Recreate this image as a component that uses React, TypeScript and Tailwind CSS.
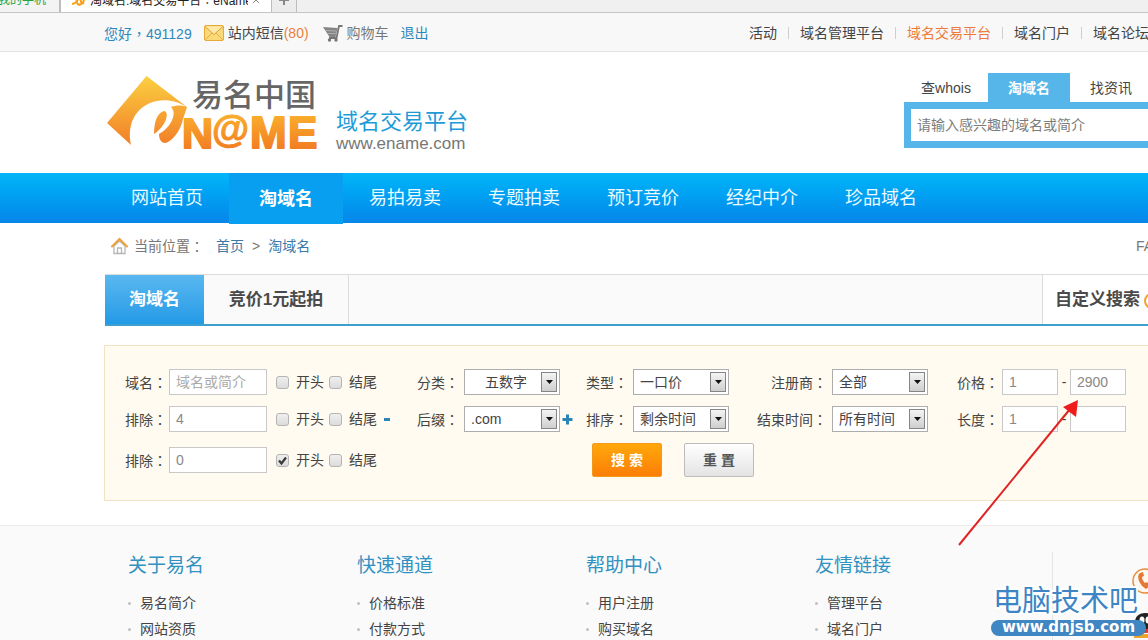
import type { ReactNode } from "react";

const siteLinks = ["活动", "域名管理平台", "域名交易平台", "域名门户", "域名论坛"];

const navItems = ["网站首页", "淘域名", "易拍易卖", "专题拍卖", "预订竞价", "经纪中介", "珍品域名"];

const footerColumns = [
  { title: "关于易名", links: ["易名简介", "网站资质"] },
  { title: "快速通道", links: ["价格标准", "付款方式"] },
  { title: "帮助中心", links: ["用户注册", "购买域名"] },
  { title: "友情链接", links: ["管理平台", "域名门户"] },
];

// Full-width punctuation sits in the middle of its cell in the TC face
function Mark({ children }: { children: string }) {
  return <span className="font-['Noto_Sans_CJK_TC',sans-serif]">{children}</span>;
}

function BrowserTabs() {
  return (
    <div className="flex h-[13px] items-end overflow-hidden border-b border-[#c4c4c4] bg-[#f0f0f0] text-xs whitespace-nowrap">
      <div className="flex h-6 w-[61px] shrink-0 items-center border-r-2 border-[#bdbdbd] bg-[#f3f3f3]">
        <span className="-ml-0.5 text-[#1fa53c]">我的手机</span>
      </div>
      <div className="flex h-6 w-[210px] shrink-0 items-center gap-1 bg-white pl-2.5 text-[#222]">
        <svg width="15" height="14" viewBox="0 0 15 14" className="shrink-0">
          <path d="M1 11c3 0 6-3 7-8M2 6c2-1 4 0 4 3s2 3 3 2M8 12c3-1 5-3 5-6s-2-3-3 0 1 5 3 4" fill="none" stroke="#f6a11d" strokeWidth="2" />
        </svg>
        <span className="w-[158px] overflow-hidden">淘域名:域名交易平台<Mark>：</Mark>eName</span>
        <svg width="8" height="8" viewBox="0 0 8 8" className="shrink-0">
          <path d="M1 1l6 6M7 1l-6 6" stroke="#888" />
        </svg>
      </div>
      <div className="flex h-6 w-[26px] shrink-0 items-center justify-center border-x border-[#bdbdbd] bg-[#ececec]">
        <svg width="10" height="10" viewBox="0 0 10 10">
          <path d="M5 0v10M0 5h10" stroke="#888" strokeWidth="2" />
        </svg>
      </div>
    </div>
  );
}

function TopBar() {
  return (
    <div className="flex h-[39px] items-center overflow-hidden border-b border-[#e3e3e3] bg-[#f8f8f8] pt-0.5 pl-[104px] whitespace-nowrap">
      <span className="text-[#2f88bd]">您好<Mark>，</Mark>491129</span>
      <a href="#messages" className="ml-3 flex items-center gap-1">
        <svg width="20" height="16" viewBox="0 0 20 16">
          <rect x="0.5" y="0.5" width="19" height="15" rx="1.5" fill="#fbd978" stroke="#e6a93a" />
          <path d="M1 15l7-7M19 15l-7-7" stroke="#e9ae43" fill="none" />
          <path d="M1 1.5l9 8 9-8" fill="#fdeaa9" stroke="#dfa036" />
        </svg>
        <span>站内短信<span className="text-[#e8813c]">(80)</span></span>
      </a>
      <a href="#cart" className="ml-3.5 flex items-center gap-1 text-[#777]">
        <svg width="20" height="17" viewBox="0 0 20 17">
          <path d="M0 2l14.500 1L12.500 12H6.500z" fill="#858585" />
          <path d="M2.500 5.500l11 .5M4.500 8.500h8.500" stroke="#b8b8b8" strokeWidth="0.8" />
          <path d="M19.500 1h-3.500L13.500 13H6" fill="none" stroke="#777" strokeWidth="1.800" />
          <circle cx="6.500" cy="15" r="1.700" fill="#777" />
          <circle cx="13" cy="15" r="1.700" fill="#777" />
        </svg>
        购物车
      </a>
      <a href="#logout" className="ml-3 text-[#2f88bd]">退出</a>
      <nav className="ml-auto flex w-[399px] shrink-0 items-center gap-[11px] overflow-hidden">
        {siteLinks.map((link, i) => (
          <div key={link} className="flex shrink-0 items-center gap-[11px]">
            {i > 0 && <span className="h-3 w-px bg-[#cfcfcf]" />}
            <a href="#site" className={link === "域名交易平台" ? "text-[#ee7a38]" : ""}>{link}</a>
          </div>
        ))}
      </nav>
    </div>
  );
}

function Logo() {
  return (
    <svg width="216" height="80" viewBox="0 0 216 80" role="img" aria-label="易名中国 eName">
      <defs>
        <linearGradient id="diamond" x1="0" y1="0" x2="0" y2="70" gradientUnits="userSpaceOnUse">
          <stop offset="0" stopColor="#fbd040" />
          <stop offset="1" stopColor="#f27d28" />
        </linearGradient>
        <linearGradient id="letters" x1="0" y1="39" x2="0" y2="74" gradientUnits="userSpaceOnUse">
          <stop offset="0" stopColor="#f9ad2c" />
          <stop offset="1" stopColor="#f27c22" />
        </linearGradient>
      </defs>
      <g fill="url(#diamond)">
        <path d="M40.500 0L81 31C70 24 56 22 44 27C28 34 21 50 25 69L1 47z" />
        <path d="M48 58C48 46 51 37 58 35C64 36 60 50 48 58z" />
        <path d="M81 31C76 29 70 29 65 31C72 38 64 52 53 58C53 65 57 69 62 66C69 62 75 53 77 43z" />
      </g>
      <text x="86" y="30" fontSize="31" fontWeight="500" fill="#666" fontFamily="'Noto Sans CJK SC', sans-serif">易名中国</text>
      <g fontFamily="'Liberation Sans', sans-serif" fontWeight="700" fill="url(#letters)" stroke="url(#letters)" strokeWidth="2" strokeLinejoin="round">
        <text x="76" y="72" fontSize="43">N</text>
        <text x="106" y="66" fontSize="38" strokeWidth="1">@</text>
        <text x="144" y="72" fontSize="44">M</text>
        <text x="182" y="72" fontSize="44">E</text>
      </g>
    </svg>
  );
}

function Header() {
  return (
    <header className="flex h-[121px] overflow-hidden pl-[106px] whitespace-nowrap">
      <a href="#home" className="mt-6 shrink-0"><Logo /></a>
      <div className="mt-14 ml-3.5 shrink-0">
        <p className="text-[22px] leading-7 text-[#1e9bd7]">域名交易平台</p>
        <p className="text-[17px] leading-4 text-[#777]">www.ename.com</p>
      </div>
      <div className="mt-[21px] ml-auto w-[244px] shrink-0">
        <div className="flex h-[29px]">
          <button type="button" className="w-[84px] shrink-0">查whois</button>
          <button type="button" className="w-[82px] shrink-0 bg-[#56b6ea] font-bold text-white">淘域名</button>
          <button type="button" className="ml-5 shrink-0">找资讯</button>
        </div>
        <input
          aria-label="搜索域名"
          placeholder="请输入感兴趣的域名或简介"
          className="h-[46px] w-full border-[7px] border-r-0 border-[#56b6ea] bg-white px-1.5 outline-none placeholder:text-[#7c7c7c]"
        />
      </div>
    </header>
  );
}

function MainNav() {
  return (
    <nav className="flex h-[50px] gap-[5px] bg-linear-to-b from-[#02b6f8] to-[#0785ea] pl-[110px] text-lg text-[#eafaff]">
      {navItems.map((item) => (
        <a
          key={item}
          href="#nav"
          className={
            item === "淘域名"
              ? "flex h-[51px] w-[114px] shrink-0 items-center justify-center bg-[#089ff0] font-bold text-white"
              : "flex w-[114px] shrink-0 items-center justify-center"
          }
        >
          {item}
        </a>
      ))}
    </nav>
  );
}

function Breadcrumb() {
  return (
    <div className="flex h-[51px] items-center overflow-hidden pb-1.5 pl-[111px] text-[#777] whitespace-nowrap">
      <svg width="17" height="18" viewBox="0 0 17 18" className="mr-1.5 shrink-0">
        <path d="M3 9v7.500h11V9L8.500 4z" fill="#fff" stroke="#b5b5b5" strokeWidth="1.300" />
        <path d="M6.500 16v-5h4v5" fill="none" stroke="#b5b5b5" strokeWidth="1.300" />
        <path d="M1 9.500L8.500 2 16 9.500" fill="none" stroke="#f0a03c" strokeWidth="2" strokeLinecap="round" />
      </svg>
      当前位置<Mark>：</Mark>
      <a href="#home" className="ml-3 text-[#3b79a6]">首页</a>
      <span className="mx-2">&gt;</span>
      <a href="#tao" className="text-[#3b79a6]">淘域名</a>
      <a href="#faq" className="ml-auto w-3 overflow-hidden">FAQ</a>
    </div>
  );
}

function ListingTabs() {
  return (
    <div className="ml-[105px] flex h-[52px] overflow-hidden border-t border-b-2 border-t-[#dcdcdc] border-b-[#3fa0d0] bg-[#fafafa] text-[17px] font-bold text-[#4a4a4a] whitespace-nowrap">
      <button type="button" className="w-[99px] shrink-0 bg-linear-to-b from-[#58b8f0] to-[#219ae6] pt-0.5 text-white">淘域名</button>
      <button type="button" className="w-[145px] shrink-0 border-r border-[#dcdcdc] pt-0.5">竞价1元起拍</button>
      <button type="button" className="ml-auto flex w-[106px] shrink-0 items-center gap-1 overflow-hidden border-l border-[#dcdcdc] bg-white pt-0.5 pl-3">
        自定义搜索
        <svg width="16" height="16" viewBox="0 0 16 16" className="shrink-0">
          <circle cx="8" cy="8" r="7" fill="#fff" stroke="#eda32c" strokeWidth="2" />
        </svg>
      </button>
    </div>
  );
}

function TextField({ id, label, value, placeholder }: { id: string; label: string; value?: string; placeholder?: string }) {
  return (
    <>
      <label htmlFor={id} className="w-11 shrink-0">{label}<Mark>：</Mark></label>
      <input
        id={id}
        defaultValue={value}
        placeholder={placeholder}
        className="h-[26px] w-[98px] border border-[#c8c8c8] bg-white px-1.5 text-[#888] outline-none placeholder:text-[#aaa]"
      />
    </>
  );
}

function Check({ label, checked }: { label: string; checked?: boolean }) {
  return (
    <label className="flex items-center gap-[7px]">
      <span className="relative flex">
        <input
          type="checkbox"
          defaultChecked={checked}
          className="peer size-[13px] appearance-none rounded-[3px] border border-[#b4b4b4] bg-linear-to-b from-[#efefef] to-[#dcdcdc]"
        />
        <svg viewBox="0 0 13 13" className="pointer-events-none absolute inset-0 hidden size-[13px] peer-checked:block">
          <path d="M3 6.500l2.500 3L10 3.500" fill="none" stroke="#3a3a3a" strokeWidth="2.200" />
        </svg>
      </span>
      {label}
    </label>
  );
}

function MatchRow({ id, label, value, placeholder, startChecked, children }: {
  id: string;
  label: string;
  value?: string;
  placeholder?: string;
  startChecked?: boolean;
  children?: ReactNode;
}) {
  return (
    <div className="flex items-center">
      <TextField id={id} label={label} value={value} placeholder={placeholder} />
      <div className="ml-[9px] flex items-center gap-[5px]">
        <Check label="开头" checked={startChecked} />
        <Check label="结尾" />
        {children}
      </div>
    </div>
  );
}

function SelectField({ id, label, value, wide, indent, children }: {
  id: string;
  label: string;
  value: string;
  wide?: boolean;
  indent?: boolean;
  children?: ReactNode;
}) {
  return (
    <div className="flex items-center">
      <label htmlFor={id} className={wide ? "w-[88px] shrink-0 pr-[5px] text-right" : "w-[47px] shrink-0"}>
        {label}<Mark>：</Mark>
      </label>
      <div className="relative">
        <select
          id={id}
          className={
            indent
              ? "block h-[26px] w-24 appearance-none border border-[#adadad] bg-white pl-5 text-[#444]"
              : "block h-[26px] w-24 appearance-none border border-[#adadad] bg-white pl-1.5 text-[#444]"
          }
        >
          <option>{value}</option>
        </select>
        <span className="pointer-events-none absolute top-[3px] right-[3px] flex h-5 w-4 items-center justify-center border border-[#858585] bg-linear-to-b from-[#f4f4f4] to-[#cfcfcf]">
          <svg width="7" height="4" viewBox="0 0 7 4">
            <path d="M0 0h7L3.500 4z" fill="#111" />
          </svg>
        </span>
      </div>
      {children}
    </div>
  );
}

function RangeField({ id, label, from, to }: { id: string; label: string; from: string; to?: string }) {
  const box = "h-[26px] w-14 border border-[#c8c8c8] bg-white px-1.5 text-[#888] outline-none";
  return (
    <div className="flex items-center">
      <label htmlFor={id} className="w-[45px] shrink-0">{label}<Mark>：</Mark></label>
      <input id={id} defaultValue={from} className={box} />
      <span className="w-3 text-center">-</span>
      <input aria-label={`${label}上限`} defaultValue={to} className={box} />
    </div>
  );
}

function SearchForm() {
  return (
    <form className="mt-[19px] ml-[104px] overflow-hidden border border-r-0 border-[#f2e3c4] bg-[#fffbf0] py-[23px] pl-5 whitespace-nowrap">
      <div className="grid grid-cols-[292px_169px_158px_213px_auto] grid-rows-[26px_26px_34px] gap-y-[11px]">
        <MatchRow id="name" label="域名" placeholder="域名或简介" />
        <SelectField id="category" label="分类" value="五数字" indent />
        <SelectField id="type" label="类型" value="一口价" />
        <SelectField id="registrar" label="注册商" value="全部" wide />
        <RangeField id="price" label="价格" from="1" to="2900" />

        <MatchRow id="exclude-1" label="排除" value="4">
          <button type="button" aria-label="减少" className="ml-0.5 h-[3px] w-1.5 bg-[#2a84b8]" />
        </MatchRow>
        <SelectField id="suffix" label="后缀" value=".com">
          <button type="button" aria-label="添加后缀" className="ml-0.5">
            <svg width="11" height="11" viewBox="0 0 11 11">
              <path d="M5.500 0.500v10M0.500 5.500h10" stroke="#2a84b8" strokeWidth="3" />
            </svg>
          </button>
        </SelectField>
        <SelectField id="order" label="排序" value="剩余时间" />
        <SelectField id="end-time" label="结束时间" value="所有时间" wide />
        <RangeField id="length" label="长度" from="1" />

        <MatchRow id="exclude-2" label="排除" value="0" startChecked />
        <div className="col-span-3 col-start-3 flex gap-[22px] pl-1.5">
          <button type="submit" className="w-[70px] rounded-xs border border-[#f39a1c] bg-linear-to-b from-[#ffa80a] to-[#fb7d08] font-bold text-white">
            搜 索
          </button>
          <button type="reset" className="w-[70px] rounded-xs border border-[#bcbcbc] bg-linear-to-b from-white to-[#e4e4e4] font-bold text-[#555]">
            重 置
          </button>
        </div>
      </div>
    </form>
  );
}

function Footer() {
  return (
    <footer className="mt-6 flex grow overflow-hidden border-t border-[#ececec] bg-[#fafafa] pl-32 whitespace-nowrap">
      {footerColumns.map((column) => (
        <div key={column.title} className="w-[229px] shrink-0 pt-[26px]">
          <h3 className="text-[19px] leading-7 text-[#3191c1]">{column.title}</h3>
          <ul className="mt-2.5">
            {column.links.map((link) => (
              <li key={link} className="flex h-[26px] items-center gap-[9px]">
                <span className="size-[3px] rounded-full bg-[#c0c0c0]" />
                <a href="#footer">{link}</a>
              </li>
            ))}
          </ul>
        </div>
      ))}
      <div className="mt-[26px] ml-2 flex-1 overflow-hidden border-l border-[#e6e6e6] pt-4">
        <svg width="106" height="72" viewBox="0 0 106 72" className="ml-[77px]">
          <circle cx="15" cy="13" r="12" fill="#fff8f0" stroke="#e58f45" strokeWidth="1.500" />
          <path d="M10 5c-4 3-1 12 6 16l4-3-3-4-2 1c-2-2-3-4-3-6l2-1-1-4z" fill="#e27a35" />
          <path d="M5 54c0-12 20-12 20 0v9H5z" fill="#222" />
          <ellipse cx="12" cy="52" rx="2.500" ry="3.500" fill="#fff" />
          <ellipse cx="18" cy="52" rx="2.500" ry="3.500" fill="#fff" />
          <path d="M3 58c8 4 16 4 24 0v4c-8 4-16 4-24 0z" fill="#d93a2c" />
          <path d="M4 68h22" stroke="#eda32c" strokeWidth="4" />
        </svg>
      </div>
    </footer>
  );
}

function Watermark() {
  return (
    <div className="absolute top-[584px] left-[991px] w-[155px] whitespace-nowrap">
      <p className="pl-0.5 text-[29px] leading-[34px] text-[#3d85c4] [-webkit-text-stroke:4px_white] [paint-order:stroke_fill]">电脑技术吧</p>
      <p className="mt-0.5 h-4 rounded-full bg-[#3f86c2] text-center font-['DejaVu_Sans',sans-serif] text-[15px] leading-[15px] font-bold text-white">www.dnjsb.com</p>
    </div>
  );
}

export default function App() {
  return (
    <div className="relative flex min-h-screen flex-col overflow-hidden bg-white font-['Liberation_Sans','Noto_Sans_CJK_SC',sans-serif] text-sm text-[#444]">
      <BrowserTabs />
      <TopBar />
      <Header />
      <MainNav />
      <Breadcrumb />
      <ListingTabs />
      <SearchForm />
      <Footer />
      <Watermark />
      <svg width="122" height="148" viewBox="0 0 122 148" className="pointer-events-none absolute top-[399px] left-[957px]">
        <path d="M2 146L113 10" stroke="#e02424" strokeWidth="2" />
        <path d="M121 1L119 18 106 8z" fill="#ee1c1c" />
      </svg>
    </div>
  );
}
